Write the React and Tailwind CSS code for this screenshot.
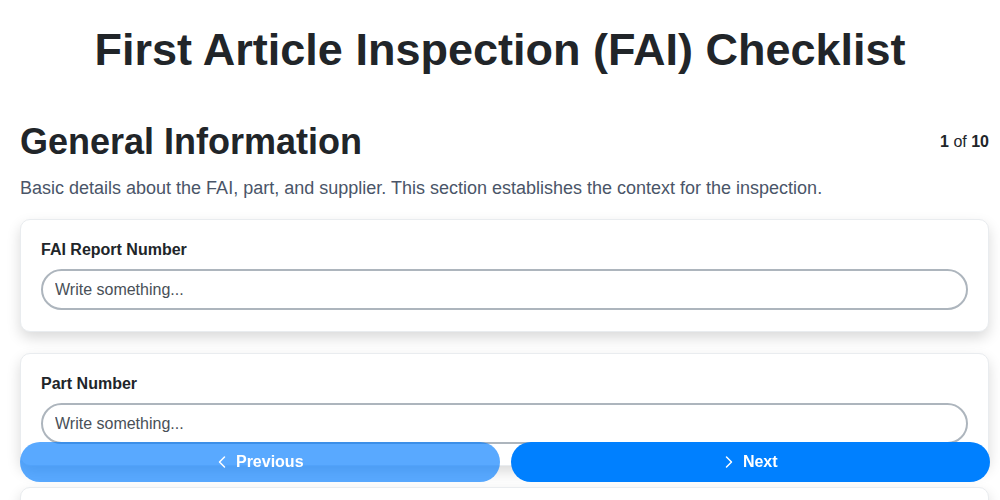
import React from 'react';
import { ChevronLeft, ChevronRight } from 'lucide-react';

const fields = ['FAI Report Number', 'Part Number', 'Part Name'];

const Field = ({ label }) => (
    <div className="rounded-[10px] border border-[#e9ecef] bg-white px-5 pt-[18px] pb-[21px] shadow-[0_6px_14px_rgba(0,0,0,0.15)]">
        <label className="block text-base font-bold text-[#212529] mb-[7px]">{label}</label>
        <input
            className="w-full h-[41px] rounded-full border-2 border-[#adb5bd] bg-white px-3 text-base text-[#495057] placeholder:text-[#495057] outline-none"
            placeholder="Write something..."
        />
    </div>
);

export default function App() {
    return (
        <div className="min-h-screen bg-white font-['Liberation_Sans',Arial,sans-serif] text-[#212529]">
            <h1 className="px-5 pt-[22px] text-center text-[45px] leading-[56px] font-bold">First Article Inspection (FAI) Checklist</h1>

            <div className="pl-5 pr-[11px]">
                <div className="mt-[42px] flex items-start justify-between">
                    <h2 className="text-[36px] leading-[44px] font-bold">General Information</h2>
                    <div className="pt-[10px] text-base"><b>1</b> of <b>10</b></div>
                </div>
                <p className="mt-[10px] text-lg text-[#4a5568]">Basic details about the FAI, part, and supplier. This section establishes the context for the inspection.</p>

                <div className="mt-[17px] flex flex-col gap-[21px] pb-24">
                    {fields.map((f) => <Field key={f} label={f} />)}
                </div>
            </div>

            <div className="fixed left-5 right-[10px] top-[442px] flex gap-[11px]">
                <button className="flex h-10 flex-1 items-center justify-center gap-1 rounded-full bg-[#007bff]/65 text-base font-bold text-white">
                    <ChevronLeft size={20} strokeWidth={1.75} className="-ml-1" />
                    Previous
                </button>
                <button className="flex h-10 flex-1 items-center justify-center gap-1 rounded-full bg-[#0080ff] text-base font-bold text-white">
                    <ChevronRight size={20} strokeWidth={1.75} className="-ml-1" />
                    Next
                </button>
            </div>
        </div>
    );
}
